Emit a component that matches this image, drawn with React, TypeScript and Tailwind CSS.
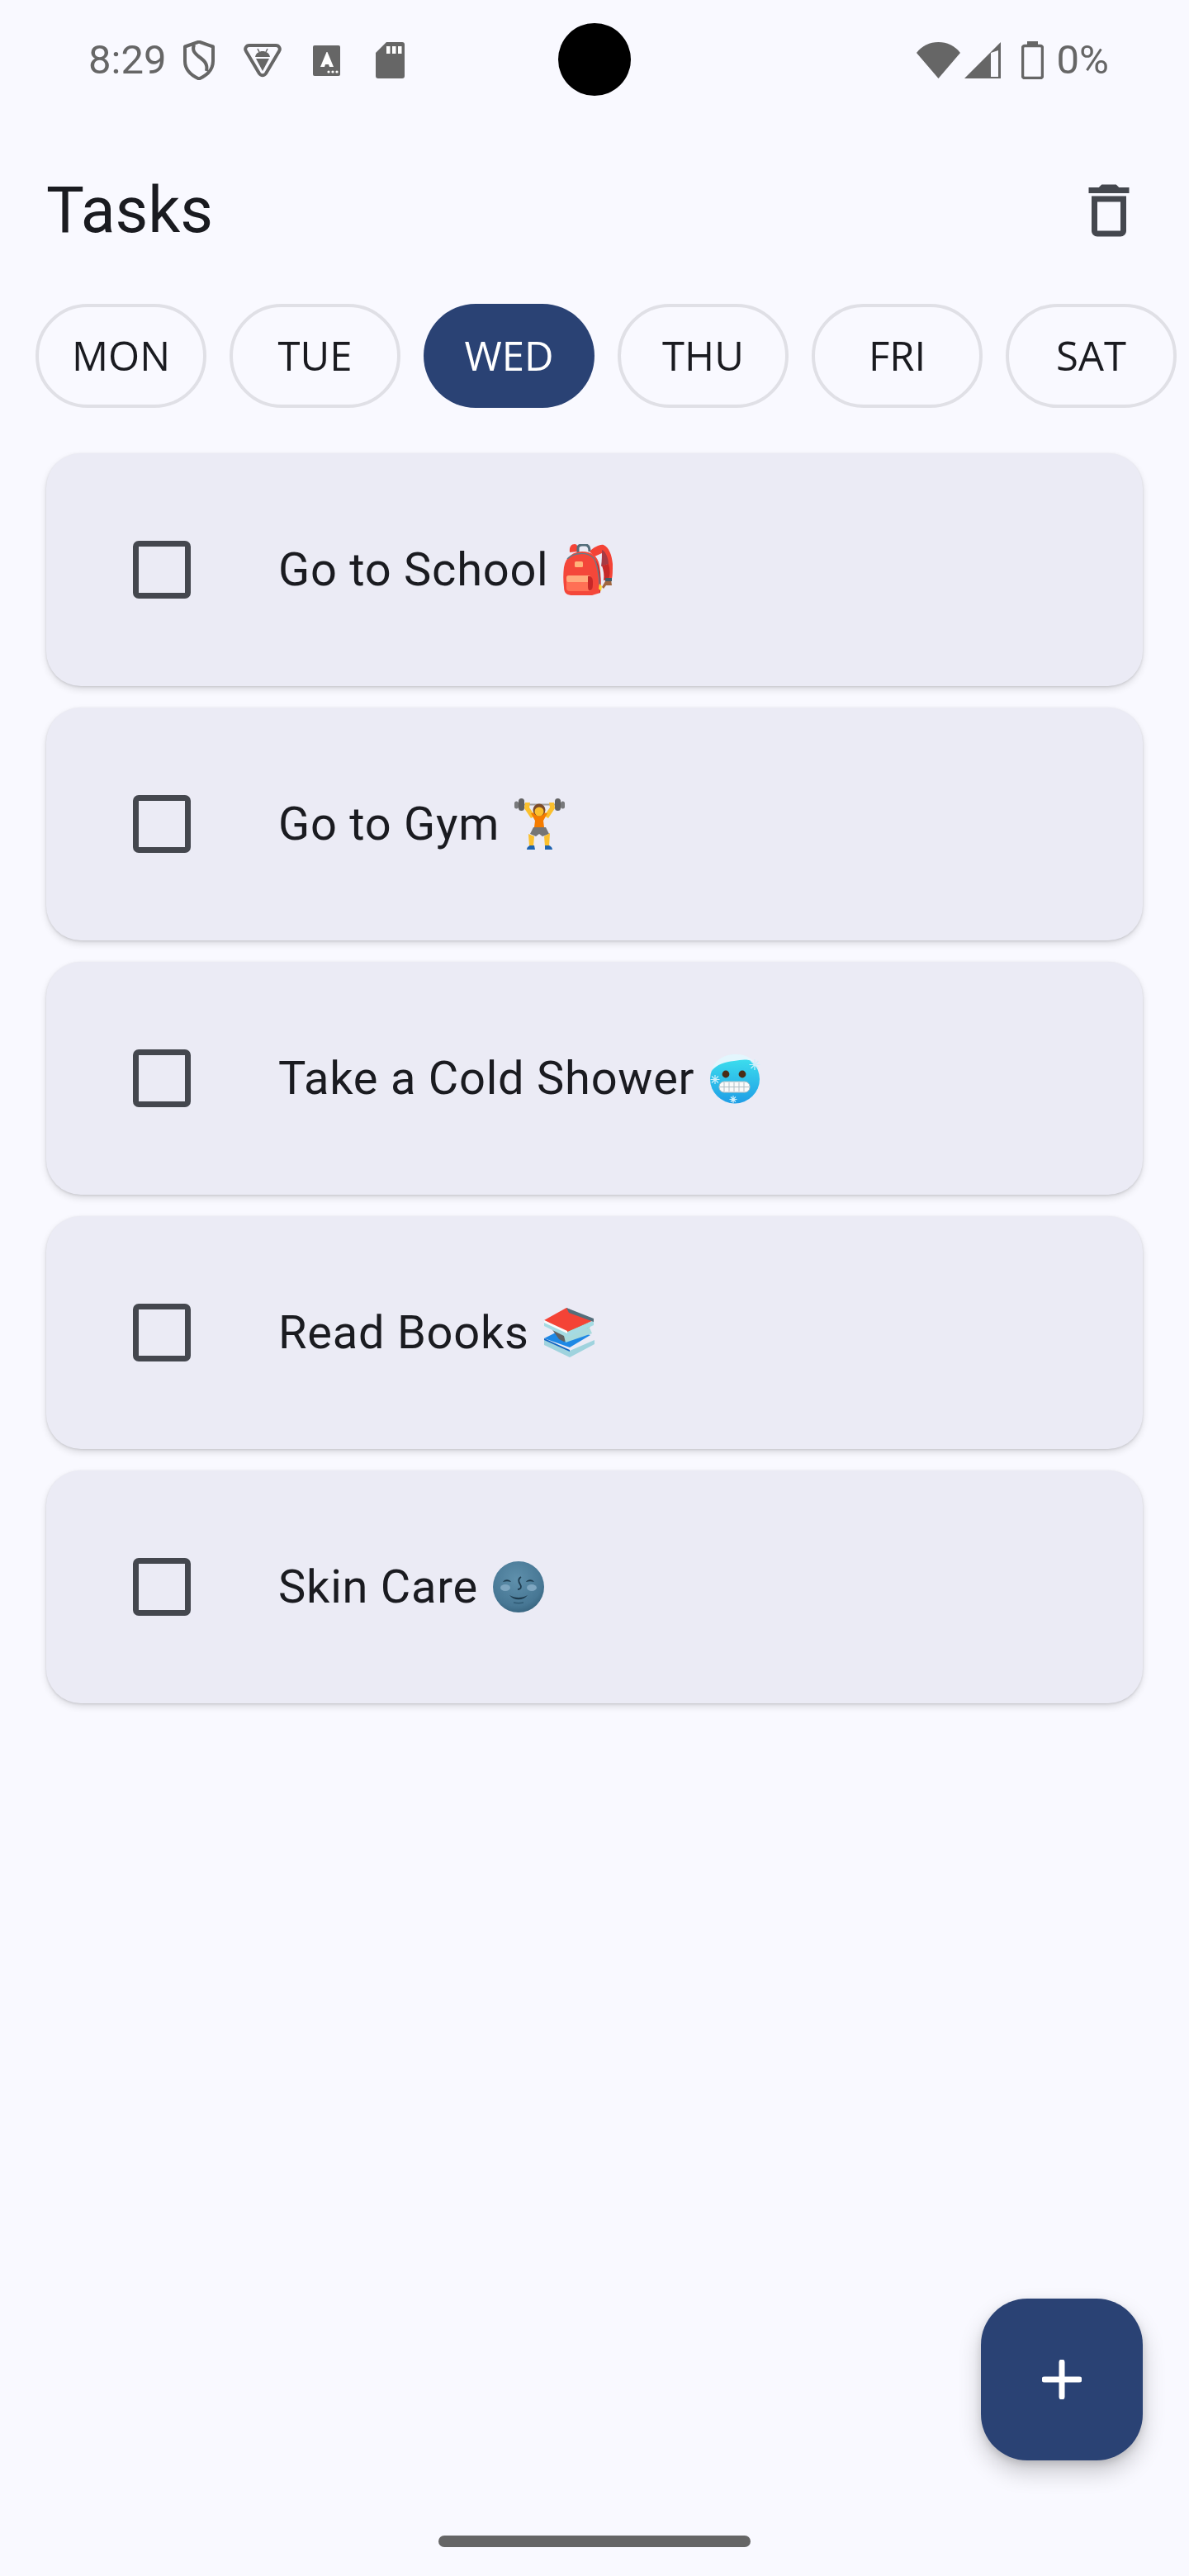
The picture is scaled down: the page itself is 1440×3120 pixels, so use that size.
import React from "react";

const days = ["MON", "TUE", "WED", "THU", "FRI", "SAT"];

function Backpack() {
  return (
    <svg viewBox="0 0 60 62" className="w-[60px] h-[62px] shrink-0">
      <path d="M8 10c-1-7 2-10 6-10 3 0 4 3 4 9z" fill="#f44336" />
      <path d="M18 10V5c0-3 2-4 5-4h4c4 0 5 3 5 8" fill="none" stroke="#546e7a" strokeWidth="3" />
      <path d="M32 9c5-5 12-9 17-8 7 3 10 13 11 23 0 8 0 14-1 18l-6 0c2-10 0-24-6-31l-9 4z" fill="#f44336" />
      <path d="M47 7c4 1 8 10 8 17l-9 3c1-7 1-14 1-20z" fill="#a63a44" />
      <path d="M47 26l8-2c2 7 2 13 0 19l-6 1c1-6 0-12-2-18z" fill="#c62828" />
      <path d="M1 28C3 15 13 9 23 9c11 0 19 5 21 17 2 11 2 22 1 33l-10 3H12C5 62 1 60 1 52 0 44 0 36 1 28z" fill="#f4473a" />
      <path d="M38 16c4 8 7 24 6 43l1-1c1-14 0-26-3-34z" fill="#c62828" />
      <path d="M5 18c8-8 24-9 32-1 4 6 7 22 7 33" fill="none" stroke="#607d8b" strokeWidth="1.300" />
      <rect x="14" y="21" width="10" height="7" rx="1.500" fill="#ffb27a" />
      <path d="M4 41c0-2 1-3 3-3h24c3 0 4 2 4 6v9c0 3-2 4-5 4H8c-3 0-4-2-4-4z" fill="#ff7055" />
      <path d="M4 41c0-2 1-3 3-3h24c2 0 2 7 0 8H6c-2 0-2-3-2-5z" fill="#ffab7d" />
      <path d="M30 39c4-1 6 2 6 7s0 9-3 10c-3 1-3-3-3-7z" fill="#c62828" />
      <path d="M47 52l4-7 7-2 1 7-7 0-3 4z" fill="#a1673f" />
      <rect x="51" y="41" width="8" height="4" fill="#455a64" />
      <path d="M44 48l3 3-1 6-3-3z" fill="#fdd835" />
    </svg>
  );
}

function Lifter() {
  return (
    <svg viewBox="0 0 61 62" className="w-[61px] h-[62px] shrink-0">
      <rect x="0" y="3.500" width="5" height="9" rx="2.500" fill="#78797b" />
      <rect x="5" y="0" width="7" height="15" rx="3.500" fill="#616161" />
      <rect x="49" y="0" width="7" height="15" rx="3.500" fill="#616161" />
      <rect x="56" y="3.500" width="5" height="9" rx="2.500" fill="#78797b" />
      <rect x="12" y="6.500" width="37" height="2" fill="#9e9e9e" />
      <path d="M13 5h6l-1 6 7 10-5 3-8-12z" fill="#fbc02d" />
      <path d="M48 5h-6l1 6-7 10 5 3 8-12z" fill="#fbc02d" />
      <path d="M20 18l6-1 4 3 4-3 6 1-5 9 1 8H24l1-8z" fill="#f57c00" />
      <circle cx="30" cy="14" r="7.500" fill="#7b4a2a" />
      <circle cx="30" cy="16" r="5.500" fill="#fbc02d" />
      <path d="M23 35h15l4 8-8 3-4-3-4 3-7-3z" fill="#757575" />
      <path d="M17 43l7 3-1 12h-5z" fill="#fbc02d" />
      <path d="M43 42l-7 4 1 12h5z" fill="#fbc02d" />
      <path d="M15 62c0-3 3-5 5-5h4l1 5zM46 62c0-3-3-5-5-5h-4v5z" fill="#1e63b0" />
    </svg>
  );
}

function Cold() {
  return (
    <svg viewBox="0 0 62 62" className="w-[62px] h-[62px] shrink-0">
      <defs>
        <linearGradient id="coldFace" x1="0" y1="0" x2="0" y2="1">
          <stop offset="0" stopColor="#3fe3ee" />
          <stop offset="1" stopColor="#1f9ee6" />
        </linearGradient>
      </defs>
      <ellipse cx="31" cy="32" rx="30" ry="29.500" fill="url(#coldFace)" />
      <path d="M3 22C6 8 20 1 34 2c7 0 15 3 20 9-10-4-15-2-24-1C19 11 9 14 3 22z" fill="#e3f6fd" />
      <circle cx="20" cy="26" r="4.400" fill="#4a2c16" />
      <circle cx="40" cy="26" r="4.400" fill="#4a2c16" />
      <rect x="12" y="35" width="37" height="13" rx="6" fill="#fafafa" stroke="#b0bec5" strokeWidth="1" />
      <path d="M18 36v11M24 36v11M30 36v11M36 36v11M42 36v11M13 41.500h35" stroke="#b0bec5" strokeWidth="1" fill="none" />
      <path d="M7 27v11M1.500 32.500h11M3 28.500l8 8M11 28.500l-8 8" stroke="#cdeffb" strokeWidth="1.200" />
      <path d="M55 8v13M48.500 14.500h13M50.500 10l9 9M59.500 10l-9 9" stroke="#cdeffb" strokeWidth="1.200" />
      <path d="M29 52v9M24.500 56.500h9M26 53.500l6 6M32 53.500l-6 6" stroke="#cdeffb" strokeWidth="1.200" />
    </svg>
  );
}

function Books() {
  return (
    <svg viewBox="0 0 62 60" className="w-[62px] h-[60px] shrink-0">
      <path d="M0 37l31 15 30-13v5L31 60 0 45z" fill="#9fd3de" />
      <path d="M0 37l26-13 30 9-25 15z" fill="#1e88e5" />
      <path d="M0 37l31 14v2L0 39z" fill="#1565c0" />
      <path d="M4 18l14 20 6 3 31-10 1-4-32-14z" fill="#616161" />
      <path d="M24 34l30-12 4 9-32 11z" fill="#a8dadc" />
      <path d="M24 29l29-11 3 5-30 11z" fill="#7cb342" />
      <path d="M0 15l28 14 32-14v6L28 36 0 22z" fill="#a5dbe3" />
      <path d="M0 15L27 0l33 15-32 14z" fill="#f44336" />
      <path d="M27 0l33 13v4l-30-11z" fill="#546e7a" />
      <path d="M0 15l28 13v3L0 18z" fill="#fafafa" />
    </svg>
  );
}

function Moon() {
  return (
    <svg viewBox="0 0 62 62" className="w-[62px] h-[62px] shrink-0">
      <defs>
        <radialGradient id="moonFace" cx="0.45" cy="0.35" r="0.75">
          <stop offset="0" stopColor="#5f90ac" />
          <stop offset="0.7" stopColor="#477794" />
          <stop offset="1" stopColor="#2f5a74" />
        </radialGradient>
      </defs>
      <circle cx="31" cy="31" r="31" fill="url(#moonFace)" />
      <ellipse cx="15" cy="32" rx="6" ry="4" fill="#7ea6c0" />
      <ellipse cx="47" cy="32" rx="6" ry="4" fill="#7ea6c0" />
      <path d="M12 25c3-4 8-3 10 0-3-1-7-1-10 0zM40 25c2-3 7-4 10 0-3-1-7-1-10 0z" fill="#1d3a4d" />
      <path d="M34 19c-4 2-3 6-1 9s1 6-3 6" fill="none" stroke="#1d3a4d" strokeWidth="1.800" />
      <path d="M20 41c6 4 16 4 22 0-5 7-17 7-22 0z" fill="#1d3a4d" />
      <path d="M25 50c4 1 8 1 12 0" fill="none" stroke="#2f5a74" strokeWidth="1.500" />
    </svg>
  );
}

const tasks: { label: string; icon: React.ReactNode }[] = [
  { label: "Go to School", icon: <Backpack /> },
  { label: "Go to Gym", icon: <Lifter /> },
  { label: "Take a Cold Shower", icon: <Cold /> },
  { label: "Read Books", icon: <Books /> },
  { label: "Skin Care", icon: <Moon /> },
];

function StatusBar() {
  return (
    <div className="relative h-[144px] flex items-start justify-between pl-[107px] pr-[97px] pt-[49px] text-[#666666] [font-family:Roboto,sans-serif] text-[49px] leading-[46px]">
      <div className="flex items-center h-[48px]">
        <span className="w-[115px]">8:29</span>
        <svg viewBox="0 0 38 48" className="w-[38px] h-[48px]">
          <path d="M19 1.500L36 7.500V25c0 10-7 17-17 21.500C9 42 2 35 2 25V7.500z" fill="none" stroke="#666666" strokeWidth="4" strokeLinejoin="round" />
          <path d="M13 5c-2 6-1 9 5 14 7 5 12 9 10 18" fill="none" stroke="#666666" strokeWidth="4" />
        </svg>
        <svg viewBox="0 0 46 42" className="w-[46px] h-[42px] ml-[35px]">
          <path d="M7 3h32c4 0 6 4 4 7L27 37c-2 3-6 3-8 0L3 10C1 7 3 3 7 3z" fill="none" stroke="#666666" strokeWidth="4" strokeLinejoin="round" />
          <path d="M14 17c1-5 5-7 9-7s8 2 9 7z" fill="#666666" />
          <path d="M15 19h16l-8 15z" fill="#666666" />
          <path d="M17 7l2 4M29 7l-2 4" stroke="#666666" strokeWidth="1.500" />
        </svg>
        <svg viewBox="0 0 33 37" className="w-[33px] h-[37px] ml-[38px]">
          <path d="M2 0h29a2 2 0 0 1 2 2v33a2 2 0 0 1-2 2H2a2 2 0 0 1-2-2V2a2 2 0 0 1 2-2z" fill="#666666" />
          <path d="M16.500 8L9 26h5l1-3h4l1 3h5L17.500 8z" fill="#ffffff" />
          <circle cx="19" cy="32" r="1.600" fill="#ffffff" />
          <circle cx="24" cy="32" r="1.600" fill="#ffffff" />
          <circle cx="29" cy="32" r="1.600" fill="#ffffff" />
        </svg>
        <svg viewBox="0 0 35 44" className="w-[35px] h-[44px] ml-[43px]">
          <path d="M13 0h19a3 3 0 0 1 3 3v38a3 3 0 0 1-3 3H3a3 3 0 0 1-3-3V13z" fill="#666666" />
          <rect x="13" y="5" width="4.500" height="9" fill="#ffffff" />
          <rect x="20" y="5" width="4.500" height="9" fill="#ffffff" />
          <rect x="27" y="5" width="4.500" height="9" fill="#ffffff" />
        </svg>
      </div>
      <div className="flex items-center h-[48px]">
        <svg viewBox="0 0 53 44" className="w-[53px] h-[44px]">
          <path d="M0 13C7 4 16 0 26.500 0S46 4 53 13L26.500 44z" fill="#666666" />
        </svg>
        <svg viewBox="0 0 44 44" className="w-[44px] h-[44px] ml-[5px]">
          <path d="M44 0v44H0z" fill="#666666" />
          <path d="M32 13v29h9V10z" fill="#f9f9ff" />
        </svg>
        <svg viewBox="0 0 27 46" className="w-[27px] h-[46px] ml-[25px]">
          <rect x="7" y="0" width="13" height="6" fill="#666666" />
          <rect x="1.500" y="5.500" width="24" height="39" rx="2.500" fill="none" stroke="#666666" strokeWidth="3.500" />
        </svg>
        <span className="ml-[16px]">0%</span>
      </div>
      <div className="absolute left-[676px] top-[28px] w-[88px] h-[88px] rounded-full bg-black" />
    </div>
  );
}

export default function App() {
  return (
    <div className="relative w-[1440px] h-[3120px] overflow-hidden bg-[#f9f9ff] text-[#1a1b20]">
      <StatusBar />
      <div className="flex items-center justify-between pl-[56px] pr-[55px] h-[112px] mt-[55px]">
        <h1 className="text-[77px] leading-[112px] font-normal [font-family:Roboto,sans-serif]">Tasks</h1>
        <svg viewBox="0 0 24 24" className="w-[84px] h-[84px] fill-[#44474e]">
          <path d="M16 9v10H8V9h8m-1.500-6h-5l-1 1H5v2h14V4h-3.500l-1-1zM18 7H6v12c0 1.100.9 2 2 2h8c1.100 0 2-.9 2-2V7z" />
        </svg>
      </div>
      <div className="flex gap-[28px] pl-[43px] mt-[57px]">
        {days.map((d) => (
          <div
            key={d}
            className={
              d === "WED"
                ? "w-[207px] h-[126px] shrink-0 rounded-[63px] bg-[#2a4274] text-white flex items-center justify-center text-[49px] [font-family:'Open_Sans',sans-serif]"
                : "w-[207px] h-[126px] shrink-0 rounded-[63px] border-[4px] border-[#e0e0e6] flex items-center justify-center text-[49px] [font-family:'Open_Sans',sans-serif]"
            }
          >
            {d}
          </div>
        ))}
      </div>
      <div className="flex flex-col gap-[26px] mx-[56px] mt-[55px]">
        {tasks.map((t) => (
          <div
            key={t.label}
            className="h-[282px] rounded-[42px] bg-[#ebebf5] flex items-center pl-[105px] shadow-[0_4px_8px_rgba(0,0,0,0.12),0_1px_3px_rgba(0,0,0,0.12)]"
          >
            <div className="w-[70px] h-[70px] rounded-[7px] border-[7px] border-[#44474e] shrink-0" />
            <div className="ml-[106px] flex items-center gap-[18px] text-[56px] tracking-[0.750px] [font-family:Roboto,sans-serif]">
              <span>{t.label}</span>
              {t.icon}
            </div>
          </div>
        ))}
      </div>
      <div className="absolute right-[56px] top-[2784px] w-[196px] h-[196px] rounded-[56px] bg-[#2a4274] flex items-center justify-center shadow-[0_14px_28px_rgba(0,0,0,0.2),0_4px_10px_rgba(0,0,0,0.12)]">
        <svg viewBox="0 0 48 48" className="w-[48px] h-[48px]">
          <path d="M24 3v42M3 24h42" stroke="#ffffff" strokeWidth="7" strokeLinecap="round" fill="none" />
        </svg>
      </div>
      <div className="absolute left-[531px] top-[3071px] w-[378px] h-[14px] rounded-full bg-[#666666]" />
    </div>
  );
}
